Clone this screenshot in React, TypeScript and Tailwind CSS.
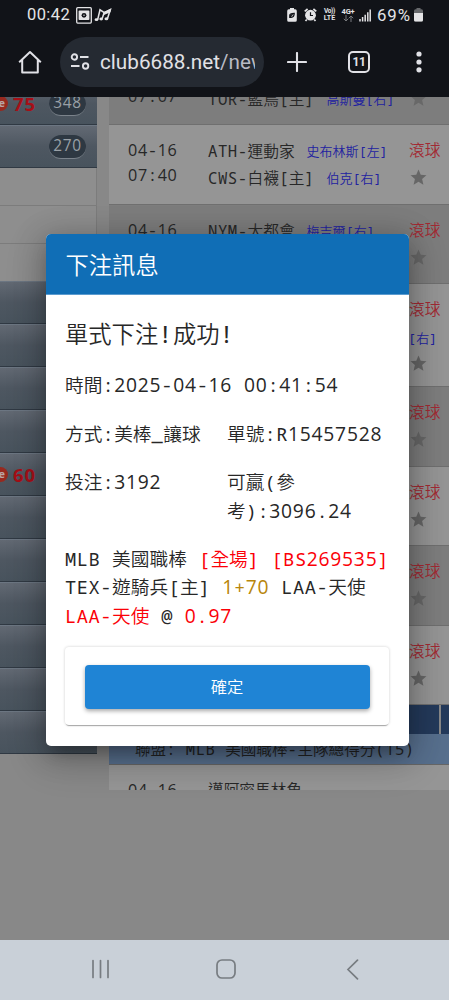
import React from "react";

function Mono({ children }: { children: string }) {
  const runs = children.match(/[0-9]+|[\x20-\x2f\x3a-\x7e]+|[^\x00-\x7f]+/g) ?? [];
  return (
    <>
      {runs.map((r, i) =>
        /^[0-9]/.test(r) ? (
          <span key={i} className="font-['Open_Sans',sans-serif] text-[1.03em] leading-none font-normal tracking-[0.041em]">{r}</span>
        ) : /^[\x20-\x7e]/.test(r) ? (
          <span key={i} className="font-['Droid_Sans_Mono','Noto_Sans_Mono','DejaVu_Sans_Mono',monospace] leading-none font-normal tracking-[0.03em] whitespace-pre">{r}</span>
        ) : (
          <span key={i}>{r}</span>
        ),
      )}
    </>
  );
}

function Star({ dim }: { dim?: boolean }) {
  return (
    <svg viewBox="0 0 24 24" className={dim ? "size-[19px] fill-[#686868]" : "size-[19px] fill-[#666]"}>
      <path d="M12 17.27 18.18 21l-1.64-7.03L22 9.24l-7.19-.61L12 2 9.19 8.63 2 9.24l5.46 4.73L5.82 21z" />
    </svg>
  );
}

type Game = { d: string; t: string; a: string; ap: string; b: string; bp: string };

function GameRow({ g, alt, tall }: { g: Game; alt?: boolean; tall?: boolean }) {
  return (
    <div
      className={`flex shrink-0 border-b border-[#6f6f6f] pl-[19px] text-[15.7px] text-[#272727] ${tall ? "h-[103px]" : "h-[79.5px]"} ${alt ? "bg-[#7d7d7d]" : "bg-[#959595]"}`}
    >
      <div className="w-[80px] pt-[12px] leading-[25px]">
        <div><Mono>{g.d}</Mono></div>
        <div><Mono>{g.t}</Mono></div>
      </div>
      <div className="w-[201px] pt-[12px] leading-[27px] whitespace-nowrap">
        <div className="flex h-[27px] gap-[12px]"><span><Mono>{g.a}</Mono></span><span className="text-[13px] text-[#2222a0]"><Mono>{g.ap}</Mono></span></div>
        <div className="flex h-[27px] gap-[12px]"><span><Mono>{g.b}</Mono></span><span className="text-[13px] text-[#2222a0]"><Mono>{g.bp}</Mono></span></div>
      </div>
      <div className="pt-[12px]">
        <div className="h-[25px] leading-[25px] text-[#a22a33]">滾球</div>
        {tall && <div className="-ml-[1px] h-[27px] pt-[3px] text-[13px] leading-[27px] whitespace-nowrap text-[#2222a0]"><Mono>[右]</Mono></div>}
        <div className="pt-[6px]"><Star dim={alt} /></div>
      </div>
    </div>
  );
}

function SideBar({ live, count }: { live?: string; count?: string }) {
  return (
    <div className="flex h-[43px] shrink-0 items-center border-t border-b border-t-[#6c7682] border-b-[#303943] bg-linear-to-b from-[#626973] via-[#4e5761] to-[#48535d]">
      {live && (
        <>
          <span className="-ml-[24px] flex h-[15px] w-[32px] items-center justify-end rounded-full bg-[#97291f] pr-[3px] font-['Open_Sans',sans-serif] text-[11px] font-bold text-[#b9a5a5]">Live</span>
          <span className="ml-[5px] w-[24px] font-['Open_Sans',sans-serif] text-[18.5px] font-bold tracking-[0.9px] text-[#a60f17]">{live}</span>
        </>
      )}
      {count && (
        <span className="mr-[11px] ml-auto flex h-[24px] w-[37px] items-center justify-center rounded-full border-b border-[#7b838b] bg-[#2e3842] text-[15px] text-[#99a0a6]"><Mono>{count}</Mono></span>
      )}
    </div>
  );
}

const empty: Game = { d: "", t: "", a: "", ap: "", b: "", bp: "" };

const games: Game[] = [
  { d: "04-16", t: "07:40", a: "ATH-運動家", ap: "史布林斯[左]", b: "CWS-白襪[主]", bp: "伯克[右]" },
  { ...empty, d: "04-16", a: "NYM-大都會", ap: "梅吉爾[右]" },
  empty,
  empty,
  empty,
  empty,
  empty,
];

function StatusBar() {
  return (
    <div className="flex h-[30px] items-center pl-[27px] text-[#e4e4e6]">
      <span className="w-[49px] text-[16.5px] leading-none tracking-[0.4px]">00:42</span>
      <svg className="h-[17px] w-[16px]" viewBox="0 0 16 17">
        <rect x=".7" y=".7" width="14.6" height="15.4" rx="1" fill="none" stroke="currentColor" strokeWidth="1.3" />
        <rect x="2.6" y="3.6" width="10.8" height="9.4" rx=".8" fill="currentColor" />
        <circle cx="8" cy="8.3" r="2.4" fill="#111318" />
        <circle cx="8" cy="8.3" r=".7" fill="currentColor" />
      </svg>
      <svg className="ml-[2px] h-[16px] w-[18px]" viewBox="0 0 18 16" fill="none" stroke="currentColor" strokeWidth="1.5">
        <path d="M3.7 12.5 6 2.8 10.3 5.6 16.3 2.6 13.5 11.5M8.2 11.5 10.3 5.6" />
        <path d="m10.3 5.6 6-3-.5 2-6 2.6z" fill="currentColor" />
        <ellipse cx="2.5" cy="12.7" rx="1.9" ry="1.4" fill="currentColor" stroke="none" />
        <ellipse cx="7.2" cy="12" rx="1.8" ry="1.4" fill="currentColor" stroke="none" />
        <ellipse cx="12.4" cy="11.8" rx="1.9" ry="1.5" fill="currentColor" stroke="none" />
      </svg>
      <div className="mr-[26px] ml-auto flex items-center pt-[1px]">
        <svg className="h-[14px] w-[10px]" viewBox="0 0 10 14">
          <path d="M3 0h4v1.3h1.2Q9.8 1.3 9.8 3v9.2Q9.8 13.7 8.2 13.7H1.8Q.2 13.7.2 12.2V3q0-1.7 1.6-1.7H3z" fill="currentColor" />
          <path d="M2.8 10V7.2q0-1.8 4.4-1.9 0 4-3 4-.6 0-1-.3 1-2 2.5-2.6" fill="none" stroke="#111318" strokeWidth="1.3" />
        </svg>
        <svg className="ml-[7px] h-[14px] w-[13px]" viewBox="0 0 13 14">
          <circle cx="6.5" cy="7.2" r="5.4" fill="currentColor" />
          <path d="M.7 3.4 3.6 1M12.3 3.4 9.4 1M2.8 11.5 1.5 13M10.2 11.5l1.3 1.5" stroke="currentColor" strokeWidth="1.7" />
          <path d="M6.5 4.2v3.3H9" fill="none" stroke="#111318" strokeWidth="1.2" />
        </svg>
        <span className="ml-[6px] w-[13px] text-center text-[7px] leading-[7px] font-bold"><span className="block text-[6.5px] tracking-[-0.3px]">Vo))</span><span className="block">LTE</span></span>
        <span className="ml-[5px] w-[14px] text-center text-[7.5px] leading-[7px] font-bold tracking-[-0.2px]">4G+
          <svg className="mx-auto h-[7px] w-[11px]" viewBox="0 0 11 7" fill="none" stroke="#77797c"><path d="M3 0v6M.8 3.8 3 6l2.2-2.2M8 7V1M5.8 3.2 8 1l2.2 2.2" /></svg>
        </span>
        <svg className="ml-[4px] h-[13px] w-[12px]" viewBox="0 0 12 13" stroke="currentColor" strokeWidth="1.5">
          <path d="M1 10v2.5M3.6 8v4.5M6.2 5.8v6.7M8.8 3.3v9.2M11.2.5v12" />
        </svg>
        <span className="ml-[6px] w-[35px] text-[16.8px] leading-none tracking-[0.9px]">69%</span>
        <svg className="ml-[2px] h-[14px] w-[9px]" viewBox="0 0 9 14">
          <path d="M2.5 0h4v1.3h1Q9 1.3 9 3v9Q9 13.5 7.5 13.5h-6Q0 13.5 0 12V3Q0 1.3 1.5 1.3h1z" fill="#66686b" />
          <path d="M0 5h9v7q0 1.5-1.5 1.5h-6Q0 13.5 0 12z" fill="currentColor" />
        </svg>
      </div>
    </div>
  );
}

function Toolbar() {
  return (
    <div className="flex h-[67px] items-center pb-[4px] text-[#e1e1e6]">
      <svg className="ml-[18px] h-[24px] w-[24px]" viewBox="0 0 24 24" fill="none" stroke="currentColor" strokeWidth="2">
        <path d="M1.2 12.2 12 2l10.8 10.2M4.2 10v12.5h15.6V10" strokeLinejoin="round" />
      </svg>
      <div className="ml-[18px] flex h-[50px] w-[204px] items-center rounded-full bg-[#252a32] pl-[10px]">
        <svg className="h-[17px] w-[20px] shrink-0" viewBox="0 0 20 17" fill="none" stroke="currentColor" strokeWidth="1.9">
          <circle cx="4.4" cy="4" r="2.7" /><path d="M10 4h8.5M1 13h8.5" /><circle cx="15.6" cy="13" r="2.7" />
        </svg>
        <div className="ml-[10px] w-[155px] overflow-hidden text-[20.7px] leading-[28px] whitespace-nowrap">club6688.net<span className="text-[#b9bbc4]">/new</span></div>
      </div>
      <svg className="ml-[23px] size-[20px]" viewBox="0 0 20 20" stroke="currentColor" strokeWidth="2.1" strokeLinecap="round"><path d="M10 1v18M1 10h18" /></svg>
      <div className="ml-[41px] flex size-[22px] items-center justify-center rounded-[5px] border-2 border-[#e1e1e6] text-[12px] leading-none font-bold tracking-[-0.5px]">11</div>
      <svg className="ml-[46px] h-[22px] w-[6px]" viewBox="0 0 6 22" fill="currentColor"><circle cx="3" cy="3" r="2.6" /><circle cx="3" cy="11" r="2.6" /><circle cx="3" cy="18.8" r="2.6" /></svg>
    </div>
  );
}

function BetDialog() {
  return (
    <div className="absolute top-[136.5px] left-[45.5px] h-[512px] w-[363px] overflow-hidden rounded-[5px] bg-white text-[18.7px] leading-[28.5px] text-[#272727]">
      <div className="flex h-[61px] items-center border-b border-[#5b9bcf] bg-[#106eb6] pt-[2px] pl-[20px] text-[23.3px] text-white">下注訊息</div>
      <div className="px-[19.5px]">
        <div className="h-[55px] pt-[23.5px] text-[23.3px] leading-[31px]"><Mono>單式下注!成功!</Mono></div>
        <div className="mt-[20.5px] h-[28.5px]"><Mono>時間:2025-04-16 00:41:54</Mono></div>
        <div className="mt-[20px] grid grid-cols-[162px_1fr] gap-y-[20px] whitespace-nowrap">
          <div className="h-[28.5px]"><Mono>方式:美棒_讓球</Mono></div>
          <div><Mono>單號:R15457528</Mono></div>
          <div><Mono>投注:3192</Mono></div>
          <div><div className="h-[28.5px]"><Mono>可贏(參</Mono></div><div className="h-[28.5px]"><Mono>考):3096.24</Mono></div></div>
        </div>
        <div className="mt-[19.5px] whitespace-nowrap">
          <div className="h-[28.5px]"><Mono>MLB 美國職棒 </Mono><span className="text-[#fb0007]"><Mono>[全場] [BS269535]</Mono></span></div>
          <div className="h-[28.5px]"><Mono>TEX-遊騎兵[主] </Mono><span className="text-[#b8860b]"><Mono>1+70</Mono></span><Mono> LAA-天使</Mono></div>
          <div className="h-[28.5px]"><span className="text-[#fb0007]"><Mono>LAA-天使</Mono></span><Mono> @ </Mono><span className="text-[#fb0007]"><Mono>0.97</Mono></span></div>
        </div>
        <div className="mt-[18px] h-[78px] rounded-[4px] px-[19.5px] pt-[17.5px] shadow-[0_2px_1px_-1px_rgba(0,0,0,.3),0_0_3px_rgba(0,0,0,.2)]">
          <button className="flex h-[44px] w-full items-center justify-center rounded-[4px] bg-[#1f84d5] text-[16.3px] text-white shadow-[0_2px_4px_rgba(0,0,0,.35)]">確定</button>
        </div>
      </div>
    </div>
  );
}

export default function App() {
  return (
    <div className="flex h-[1000px] w-[449px] flex-col overflow-hidden bg-[#888] font-['Noto_Sans_CJK_TC',sans-serif] font-[350]">
      <header className="h-[97px] shrink-0 bg-[#111318] font-['Roboto',sans-serif] font-normal">
        <StatusBar />
        <Toolbar />
      </header>
      <main className="relative flex h-[843px] shrink-0 overflow-hidden">
        <aside className="-mt-[15px] flex w-[97px] shrink-0 flex-col overflow-hidden">
          <SideBar live="75" count="348" />
          <SideBar count="270" />
          <div className="h-[38px] shrink-0 border-r border-b border-[#7c7c7c] bg-[#8e8e8e]" />
          <div className="h-[38px] shrink-0 border-r border-b border-[#7c7c7c] bg-[#8e8e8e]" />
          <div className="h-[37px] shrink-0 border-r border-[#7c7c7c] bg-[#8e8e8e]" />
          {Array.from({ length: 11 }, (_, i) => <SideBar key={i} live={i === 4 ? "60" : undefined} />)}
        </aside>
        <section className="-mt-[51.5px] ml-[12px] flex h-[744.5px] w-[340px] flex-col overflow-hidden">
          <GameRow alt g={{ ...empty, d: "04-16", t: "07:07", b: "TOR-藍鳥[主]", bp: "高斯曼[右]" }} />
          {games.map((g, i) => <GameRow key={i} g={g} alt={i % 2 === 1} tall={i === 2} />)}
          <div className="flex h-[29px] shrink-0"><div className="w-[330px] bg-[#243a5b]" /><div className="ml-[2px] flex-1 bg-[#243a5b]" /></div>
          <div className="h-[30.5px] shrink-0 border-b border-[#666] bg-[#576f8d] pl-[26px] text-[15.6px] leading-[28px] whitespace-nowrap text-[#222]"><Mono>聯盟: MLB 美國職棒-主隊總得分(15)</Mono></div>
          <div className="flex flex-1 bg-[#959595] pt-[12px] pl-[19px] text-[15.7px] leading-[25px] whitespace-nowrap text-[#272727]"><span className="w-[80px]"><Mono>04-16</Mono></span><span>邁阿密馬林魚</span></div>
        </section>
        <div className="absolute top-[136.5px] left-[45.5px] h-[512px] w-[363px] rounded-[5px] shadow-[0_11px_15px_-7px_rgba(0,0,0,.25),0_12px_38px_3px_rgba(0,0,0,.18),0_5px_30px_5px_rgba(0,0,0,.16)]" />
        <BetDialog />
      </main>
      <nav className="flex h-[60px] shrink-0 items-center bg-[#c9d0d8] pb-[2px] text-[#777c81]">
        <svg className="ml-[91px] h-[20px] w-[19px]" viewBox="0 0 19 20" stroke="currentColor" strokeWidth="1.7" strokeLinecap="round"><path d="M2 1.5v17M9.5 1.5v17M17 1.5v17" /></svg>
        <svg className="ml-[106px] size-[20px]" viewBox="0 0 20 20" fill="none" stroke="currentColor" strokeWidth="1.7"><rect x="1" y="1" width="18" height="18" rx="5" /></svg>
        <svg className="ml-[110px] h-[21px] w-[13px]" viewBox="0 0 13 21" fill="none" stroke="currentColor" strokeWidth="1.7" strokeLinecap="round"><path d="M11.5 1.2 2 10.5l9.5 9.3" /></svg>
      </nav>
    </div>
  );
}
